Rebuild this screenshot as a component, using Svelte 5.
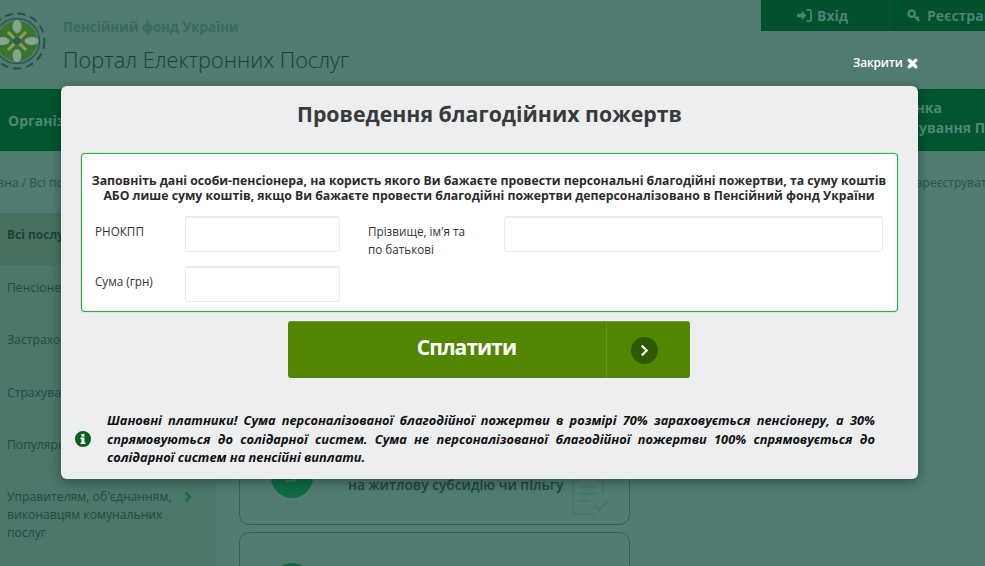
<script>
  const menu = ["Пенсіонерам", "Застрахованим", "Страхувальникам", "Популярні"];
</script>

<div class="page">
  <header class="top">
    <div class="brand">
      <svg class="logo" viewBox="0 0 60 60" aria-hidden="true">
        <circle cx="30" cy="30" r="27.500" fill="none" stroke="#234f44" stroke-width="1.800" stroke-dasharray="8 5" />
        <circle cx="30" cy="30" r="22.500" fill="none" stroke="#2a5a50" stroke-width="1.400" />
        <circle cx="30" cy="30" r="20" fill="#3a7530" />
        <g fill="#86a58f">
          <ellipse cx="30" cy="15.500" rx="4.500" ry="6.500" />
          <ellipse cx="30" cy="44.500" rx="4.500" ry="6.500" />
          <ellipse cx="15.500" cy="30" rx="7" ry="4" />
          <ellipse cx="44.500" cy="30" rx="7" ry="4" />
        </g>
        <path d="M21 21l18 18M39 21L21 39" stroke="#8d9a5c" stroke-width="3" />
        <circle cx="30" cy="30" r="3.800" fill="#2e5a55" />
      </svg>
      <div>
        <div class="fund">Пенсійний фонд України</div>
        <div class="portal">Портал Електронних Послуг</div>
      </div>
    </div>
    <div class="auth">
      <span class="auth-item login">
        <svg viewBox="0 0 16 14" aria-hidden="true"><path d="M0 5h5V2l5 5-5 5V9H0z" /><path d="M10 1h3a2 2 0 0 1 2 2v8a2 2 0 0 1-2 2h-3" fill="none" stroke="currentColor" stroke-width="2" /></svg>
        Вхід
      </span>
      <span class="auth-item register">
        <svg viewBox="0 0 16 14" aria-hidden="true"><circle cx="5" cy="5" r="3.400" fill="none" stroke="currentColor" stroke-width="2.400" /><path d="M7.500 7.500L13 13M10.500 10.500l2-2" stroke="currentColor" stroke-width="2.400" /></svg>
        Реєстрація
      </span>
    </div>
  </header>

  <nav class="band">
    <span class="band-left">Організації</span>
    <span class="band-right">Сторінка<br />Страхування Пенсій</span>
  </nav>

  <div class="crumbs">
    <span>Головна / Всі послуги</span>
    <span class="crumb-right">зареєструватись</span>
  </div>

  <div class="body">
    <aside class="side">
      <div class="side-item active">Всі послуги</div>
      {#each menu as item}
        <div class="side-item">{item}</div>
      {/each}
      <div class="side-item multi">
        <span>Управителям, об'єднанням,<br />виконавцям комунальних<br />послуг</span>
        <svg class="chev" viewBox="0 0 8 12" aria-hidden="true"><path d="M1.500 1.500L6 6l-4.500 4.500" fill="none" stroke="currentColor" stroke-width="2.600" /></svg>
      </div>
    </aside>
    <main class="cards">
      <div class="card first">
        <div class="badge">
          <svg viewBox="0 0 24 24" aria-hidden="true"><path d="M6 6v10h7M12 13l3 3 5-6" fill="none" stroke="#3f7a6a" stroke-width="1.400" /></svg>
        </div>
        <div class="card-text">на житлову субсидію чи пільгу</div>
        <svg class="doc" viewBox="0 0 42 38" aria-hidden="true">
          <path d="M3 1h30v16M3 1v36h22M9 10h18M9 17h18M9 24h10M24 28l5 5 10-11" fill="none" stroke="#46756a" stroke-width="2" />
        </svg>
      </div>
      <div class="card second"><div class="badge"></div></div>
    </main>
  </div>
</div>

<span class="close">Закрити <svg viewBox="0 0 12 12" aria-hidden="true"><path d="M2.500 2.500l7 7M9.500 2.500l-7 7" stroke="currentColor" stroke-width="3.600" stroke-linecap="round" /></svg></span>

<section class="modal">
  <h1>Проведення благодійних пожертв</h1>

  <form class="box">
    <p class="lead">
      Заповніть дані особи-пенсіонера, на користь якого Ви бажаєте провести персональні благодійні пожертви, та суму коштів<br />
      АБО лише суму коштів, якщо Ви бажаєте провести благодійні пожертви деперсоналізовано в Пенсійний фонд України
    </p>
    <div class="fields">
      <span class="lbl">РНОКПП</span>
      <input class="inp" type="text" />
      <span class="lbl name">Прізвище, ім'я та<br />по батькові</span>
      <input class="inp" type="text" />
      <span class="lbl">Сума (грн)</span>
      <input class="inp" type="text" />
    </div>
  </form>

  <button class="pay" type="button">
    <span class="pay-text">Сплатити</span>
    <span class="pay-side">
      <span class="pay-dot">
        <svg viewBox="0 0 10 12" aria-hidden="true"><path d="M2.500 1.500L7 6l-4.500 4.500" fill="none" stroke="#fff" stroke-width="2" /></svg>
      </span>
    </span>
  </button>

  <div class="note">
    <svg class="info" viewBox="0 0 16 16" aria-hidden="true">
      <circle cx="8" cy="8" r="8" fill="#0b5e1e" />
      <rect x="6.400" y="3" width="3" height="2.600" fill="#fff" />
      <path d="M5.500 6.600h3.900v5h1.100v1.400h-5v-1.400h1v-3.600h-1z" fill="#fff" />
    </svg>
    <p>Шановні платники! Сума персоналізованої благодійної пожертви в розмірі 70% зараховується пенсіонеру, а 30% спрямовуються до солідарної систем. Сума не персоналізованої благодійної пожертви 100% спрямовується до солідарної систем на пенсійні виплати.</p>
  </div>
</section>

<style>
  :global(body) {
    margin: 0;
    overflow: hidden;
    font-family: "Open Sans", "Noto Sans", sans-serif;
  }

  .page {
    height: 566px;
    overflow: hidden;
    background: #4f7b70;
    color: #2a5449;
  }

  .top {
    height: 89px;
    display: flex;
    justify-content: space-between;
    box-sizing: border-box;
  }

  .brand {
    display: flex;
    gap: 16px;
    margin-left: -13px;
    padding-top: 11px;
  }

  .logo {
    width: 60px;
    height: 60px;
  }

  .fund {
    font-size: 13.400px;
    font-weight: 700;
    line-height: 18px;
    margin-top: 7px;
    color: #386a5a;
  }

  .portal {
    font-size: 21.700px;
    font-weight: 300;
    line-height: 30px;
    margin-top: 9px;
    color: #173f38;
  }

  .auth {
    width: 224px;
    height: 31px;
    flex: none;
    display: flex;
    background: #03502d;
    font-size: 14px;
    font-weight: 700;
    color: #4b8471;
    white-space: nowrap;
    overflow: hidden;
  }

  .auth-item {
    display: flex;
    align-items: center;
    gap: 5px;
    flex: none;
  }

  .auth-item svg {
    width: 15px;
    height: 13px;
    fill: currentColor;
  }

  .login {
    width: 129px;
    box-sizing: border-box;
    padding-left: 36px;
    border-right: 1px solid #0a5a36;
  }

  .register {
    padding-left: 17px;
  }

  .band {
    height: 62px;
    background: #03552f;
    display: flex;
    justify-content: space-between;
    font-size: 14px;
    font-weight: 700;
    color: #4b8a72;
    white-space: nowrap;
    overflow: hidden;
  }

  .band-left {
    margin: 22px 0 0 8px;
  }

  .band-right {
    width: 108px;
    flex: none;
    line-height: 20px;
    margin-top: 9px;
  }

  .crumbs {
    height: 62px;
    display: flex;
    justify-content: space-between;
    font-size: 12px;
    line-height: 64px;
    white-space: nowrap;
    overflow: hidden;
    color: #2a5449;
  }

  .crumbs span:first-child {
    margin-left: -30px;
  }

  .crumb-right {
    margin-right: -22px;
  }

  .body {
    display: flex;
    gap: 23px;
  }

  .side {
    width: 216px;
    flex: none;
    background: #4b766a;
  }

  .side-item {
    height: 52.300px;
    box-sizing: border-box;
    padding: 14px 0 0 7px;
    font-size: 12.200px;
    line-height: 18px;
    white-space: nowrap;
    color: #234d42;
  }

  .side-item.active {
    background: #47705f;
    font-size: 12px;
    font-weight: 700;
    color: #1d4238;
    height: 52px;
    padding-top: 13px;
  }

  .side-item.multi {
    height: auto;
    display: flex;
    gap: 14px;
    padding-top: 14px;
  }

  .multi span {
    width: 163px;
  }

  .chev {
    width: 8px;
    height: 12px;
    margin-top: 3px;
    color: #1e6a45;
  }

  .cards {
    width: 391px;
    flex: none;
    display: flex;
    flex-direction: column;
    gap: 7px;
    margin-top: 198px;
  }

  .card {
    position: relative;
    height: 114px;
    flex: none;
    box-sizing: border-box;
    border: 1px solid #33624f;
    border-radius: 10px;
    padding: 44px 0 0 31px;
    display: flex;
    gap: 35px;
  }

  .card.second {
    padding-top: 30px;
  }

  .badge {
    width: 42px;
    height: 42px;
    flex: none;
    border-radius: 50%;
    background: #0c6a42;
    display: flex;
    align-items: center;
    justify-content: center;
  }

  .badge svg {
    width: 24px;
    height: 24px;
  }

  .card-text {
    font-size: 13.800px;
    font-weight: 600;
    line-height: 20px;
    margin-top: 19px;
    white-space: nowrap;
    color: #21493e;
  }

  .doc {
    position: absolute;
    right: 17px;
    bottom: 9px;
    width: 42px;
    height: 38px;
  }

  .close {
    position: absolute;
    left: 853px;
    top: 55px;
    display: flex;
    align-items: center;
    gap: 4px;
    font-size: 12px;
    font-weight: 600;
    line-height: 16px;
    letter-spacing: -0.200px;
    color: #fff;
  }

  .close svg {
    width: 11px;
    height: 11px;
  }

  .modal {
    position: absolute;
    left: 61px;
    top: 86px;
    width: 857px;
    height: 393px;
    box-sizing: border-box;
    padding: 0 20px;
    background: #eceef0;
    border-radius: 6px;
    box-shadow: 0 3px 12px rgba(0, 0, 0, 0.35);
    color: #222;
  }

  h1 {
    margin: 0;
    height: 67px;
    text-align: center;
    font-size: 21.300px;
    font-weight: 700;
    line-height: 56px;
    color: #3a3a3a;
  }

  .box {
    height: 159px;
    box-sizing: border-box;
    background: #fff;
    border: 1px solid #1fb53c;
    border-radius: 4px;
    box-shadow: 0 0 1px #35c050;
    padding: 19px 14px 0 13px;
  }

  .lead {
    margin: 0 -10px;
    text-align: center;
    font-size: 12.250px;
    font-weight: 700;
    line-height: 15px;
    white-space: nowrap;
    color: #2b2b2b;
  }

  .fields {
    display: grid;
    grid-template-columns: 90px 155px 164px 1fr;
    grid-template-rows: 36px 36px;
    gap: 14px 0;
    margin-top: 13px;
  }

  .fields .inp:last-child {
    grid-column: 2;
  }

  .lbl {
    font-size: 11.700px;
    line-height: 18px;
    padding-top: 6px;
    color: #333;
  }

  .lbl.name {
    padding-left: 28px;
  }

  .inp {
    box-sizing: border-box;
    width: 100%;
    height: 36px;
    border: 1px solid #ebebeb;
    border-top-width: 2px;
    border-radius: 3px;
    background: #fff;
  }

  .pay {
    display: flex;
    width: 402px;
    height: 57px;
    margin: 9px 0 0 207px;
    padding: 0;
    border: 0;
    border-top: 1px solid #6e9a30;
    border-radius: 3px;
    background: #528500;
    color: #fff;
    font-family: inherit;
  }

  .pay-text {
    flex: 1;
    text-align: center;
    font-size: 21px;
    font-weight: 700;
    line-height: 50px;
    letter-spacing: -0.900px;
    padding-left: 39px;
  }

  .pay-side {
    width: 83px;
    height: 100%;
    flex: none;
    border-left: 1px solid #5f9a0c;
    display: flex;
    align-items: center;
    justify-content: center;
  }

  .pay-dot {
    width: 27px;
    height: 27px;
    border-radius: 50%;
    background: #2d5a00;
    display: flex;
    align-items: center;
    justify-content: center;
    margin-right: 9px;
  }

  .pay-dot svg {
    width: 11px;
    height: 13px;
  }

  .note {
    display: flex;
    align-items: center;
    gap: 16px;
    margin: 33px 23px 0 -6px;
  }

  .info {
    width: 16px;
    height: 16px;
    flex: none;
  }

  .note p {
    margin: 0;
    font-size: 12.800px;
    font-weight: 700;
    font-style: italic;
    line-height: 18.500px;
    text-align: justify;
    color: #111;
  }
</style>
